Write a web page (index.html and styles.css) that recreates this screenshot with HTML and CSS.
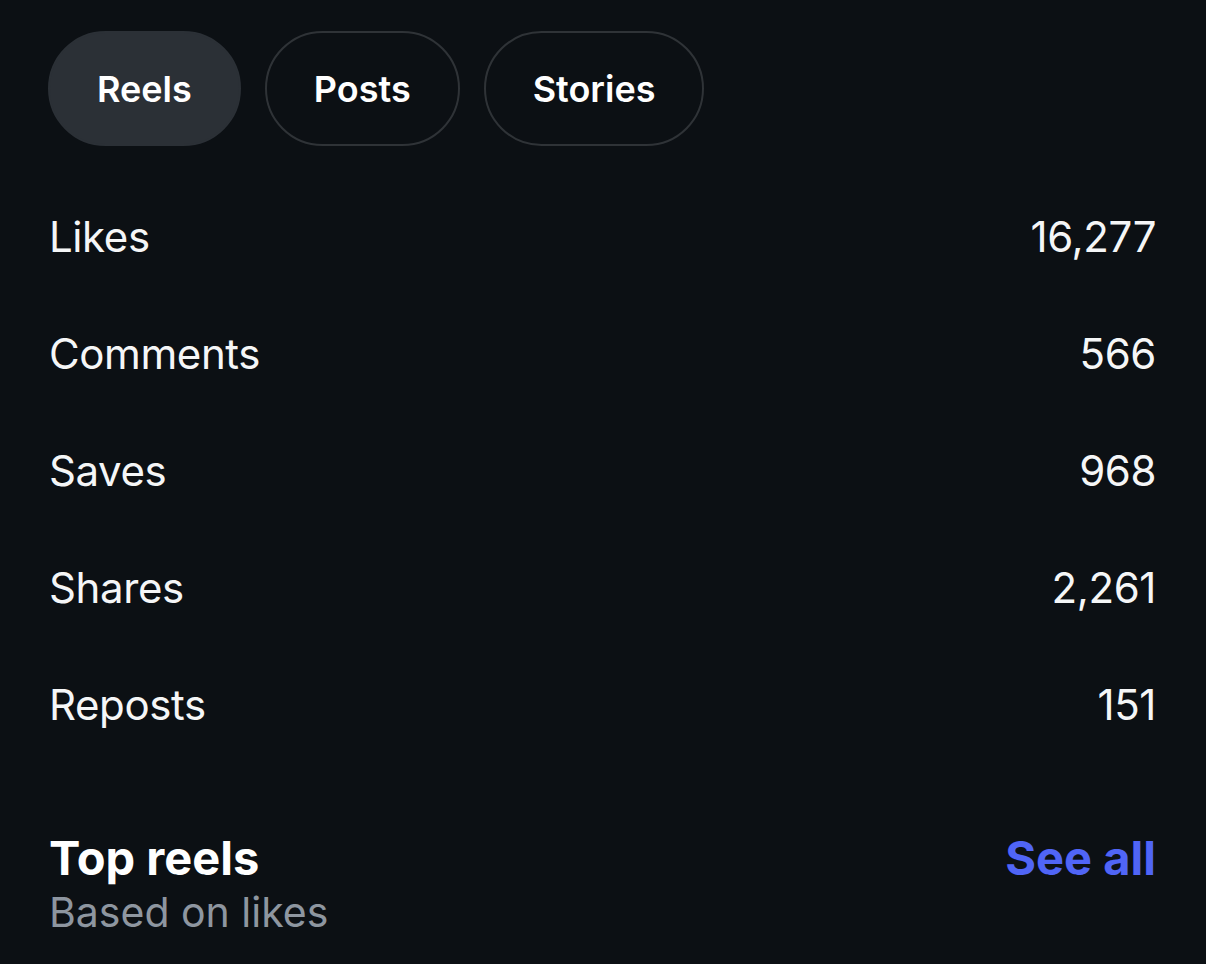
FILE: index.html
```html
<!DOCTYPE html>
<html>
<head>
<meta charset="utf-8">
<link rel="stylesheet" href="styles.css">
</head>
<body>
<div class="page">
  <div class="tabs">
    <div class="pill active">Reels</div>
    <div class="pill">Posts</div>
    <div class="pill">Stories</div>
  </div>
  <div class="stats">
    <div class="row"><span>Likes</span><span>16,277</span></div>
    <div class="row"><span>Comments</span><span>566</span></div>
    <div class="row"><span>Saves</span><span>968</span></div>
    <div class="row"><span>Shares</span><span>2,261</span></div>
    <div class="row"><span>Reposts</span><span>151</span></div>
  </div>
  <div class="section">
    <div class="section-text">
      <div class="section-title">Top reels</div>
      <div class="section-sub">Based on likes</div>
    </div>
    <div class="see-all">See all</div>
  </div>
</div>
</body>
</html>
```

FILE: styles.css
```css
html, body {
  margin: 0;
  padding: 0;
  background: #0c1014;
  height: 100%;
  overflow: hidden;
}
.page {
  font-family: Inter, "Noto Sans", sans-serif;
  color: #f5f6f7;
  padding: 31px 50px 0 48px;
}
.tabs {
  display: flex;
  gap: 24px;
}
.pill {
  height: 115px;
  box-sizing: border-box;
  border: 2px solid #2f3337;
  border-radius: 58px;
  padding: 0 47px;
  display: flex;
  align-items: center;
  font-size: 36px;
  font-weight: 600;
  color: #ffffff;
}
.pill.active {
  background: #2b3036;
  border-color: #2b3036;
}
.stats {
  margin-top: 32px;
}
.row {
  height: 117px;
  display: flex;
  justify-content: space-between;
  align-items: center;
  font-size: 42px;
  letter-spacing: -0.4px;
  font-weight: 400;
  padding-left: 1px;
}
.section {
  margin-top: 67px;
  display: flex;
  justify-content: space-between;
  align-items: flex-start;
  padding-left: 1px;
}
.section-title {
  font-size: 47px;
  font-weight: 700;
  line-height: 56px;
  color: #ffffff;
}
.section-sub {
  font-size: 41px;
  line-height: 52px;
  color: #8e96a0;
}
.see-all {
  font-size: 47px;
  font-weight: 700;
  line-height: 56px;
  color: #5065f6;
}
```
